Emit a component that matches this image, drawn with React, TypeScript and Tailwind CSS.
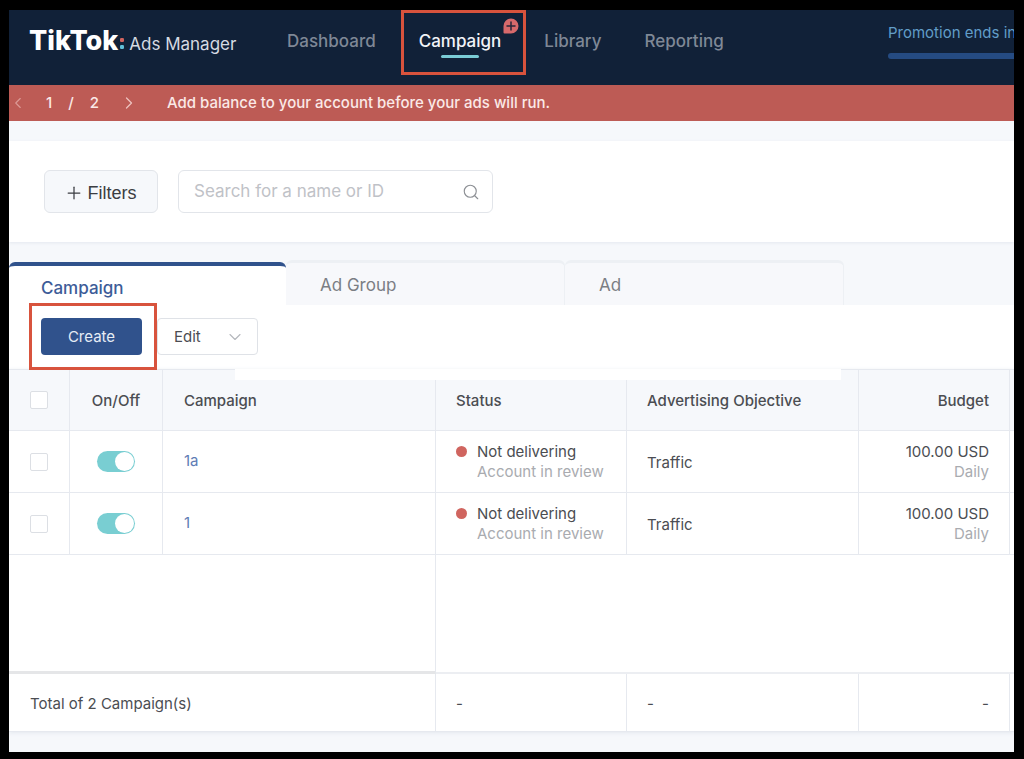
import { ChevronDown, ChevronLeft, ChevronRight, Plus, Search } from "lucide-react";

const rows = [
  { name: "1a", status: "Not delivering", note: "Account in review", objective: "Traffic", budget: "100.00 USD", period: "Daily" },
  { name: "1", status: "Not delivering", note: "Account in review", objective: "Traffic", budget: "100.00 USD", period: "Daily" },
];

const line = "border-[#e6e9ef]";

function Highlight({ className }: { className: string }) {
  return <span aria-hidden="true" className={`pointer-events-none absolute border-3 border-[#d8533d] ${className}`} />;
}

function Logo() {
  return (
    <a href="#home" className="flex items-baseline">
      <span className="text-[27px] leading-8 font-extrabold text-white">TikTok</span>
      <svg width="6" height="13" viewBox="0 0 6 13" className="ml-px" aria-hidden="true">
        <rect x="1" y="1" width="4" height="4" rx="1.2" fill="#d2645f" />
        <rect x="1" y="8" width="4" height="4" rx="1.2" fill="#62bfd8" />
      </svg>
      <span className="ml-1 text-[17px] leading-8 text-[#d5dae2]">Ads Manager</span>
    </a>
  );
}

function TopBar() {
  return (
    <header className="flex h-[75px] shrink-0 items-start bg-[#112138] pl-5">
      <div className="w-[258px] shrink-0 pt-[15px]">
        <Logo />
      </div>
      <nav className="flex shrink-0 gap-[43px] pt-[19px] text-[17px] leading-6 font-medium text-[#7f8896]">
        <a href="#dashboard">Dashboard</a>
        <a href="#campaign" className="relative flex flex-col items-center text-[#f1f4f8]">
          Campaign
          <span className="mt-[2px] h-[3px] w-[38px] rounded-full bg-[#7accd6]" />
          <svg width="16" height="16" viewBox="0 0 16 16" className="absolute -top-[11px] -right-[18px]" aria-hidden="true">
            <path d="M8 .5a7.5 7.5 0 1 1 0 15H1.5a1 1 0 0 1-1-1V8A7.5 7.5 0 0 1 8 .5Z" fill="#d7696b" />
            <path d="M8 4v8M4 8h8" stroke="#27263a" strokeWidth="1.5" strokeLinecap="round" />
          </svg>
          <Highlight className="-top-[19px] -right-[25px] -left-[18px] h-[65px]" />
        </a>
        <a href="#library">Library</a>
        <a href="#reporting">Reporting</a>
      </nav>
      <div className="ml-auto w-[126px] shrink-0 overflow-hidden pt-3">
        <p className="text-[15px] leading-[22px] whitespace-nowrap text-[#619dc8]">Promotion ends in</p>
        <div className="mt-[9px] h-[6px] rounded-l-full bg-[#254b82]" />
      </div>
    </header>
  );
}

function Notice() {
  return (
    <div className="flex h-9 shrink-0 items-center bg-[#bd5b55] text-[15px] font-medium text-[#fbe9e7]">
      <button type="button" aria-label="Previous notice" className="flex w-[37px] text-[#dc9a96]">
        <ChevronLeft size={18} strokeWidth={1.5} />
      </button>
      <span className="flex w-[73px] gap-4">
        <span>1</span>
        <span>/</span>
        <span>2</span>
      </span>
      <button type="button" aria-label="Next notice" className="flex w-12 text-[#eec2bf]">
        <ChevronRight size={20} strokeWidth={1.5} />
      </button>
      <p>Add balance to your account before your ads will run.</p>
    </div>
  );
}

function FilterBar() {
  return (
    <section className="mt-5 flex shrink-0 gap-5 bg-white px-[35px] py-[29px] shadow-[0_1px_3px_#e4e8ef]">
      <button type="button" className="flex h-[43px] w-[114px] items-center justify-center gap-1 rounded-md border border-[#e2e5ea] bg-[#f6f8fb] pt-[2px] pr-[2px] font-['Liberation_Sans',sans-serif] text-lg text-[#3b3d42]">
        <Plus size={20} strokeWidth={1.5} />
        Filters
      </button>
      <label className="flex h-[43px] w-[315px] items-center rounded-md border border-[#e2e5ea] bg-white pr-3 pl-[15px]">
        <input type="text" aria-label="Search campaigns" placeholder="Search for a name or ID" className="min-w-0 flex-1 text-[17px] text-[#4b4d52] outline-none placeholder:text-[#bfc2c7]" />
        <Search size={18} strokeWidth={1.5} className="text-[#8c8f94]" />
      </label>
    </section>
  );
}

function Tabs() {
  return (
    <div role="tablist" className="mt-[18px] flex h-[45px] shrink-0 items-end text-left text-[17px] leading-6">
      <button type="button" role="tab" aria-selected="true" className="h-[43px] w-[277px] rounded-t-md border-t-4 border-[#30528c] bg-white pt-1 pl-8 text-left font-medium text-[#3d5c98]">
        Campaign
      </button>
      <button type="button" role="tab" aria-selected="false" className="h-[45px] w-[279px] rounded-t-md border-t-3 border-r border-[#edf0f4] bg-[#f7f8fb] pt-[2px] pl-[34px] text-left text-[#7b7e84]">
        Ad Group
      </button>
      <button type="button" role="tab" aria-selected="false" className="h-[45px] w-[279px] rounded-t-md border-t-3 border-r border-[#edf0f4] bg-[#f7f8fb] pt-[2px] pl-[34px] text-left text-[#7b7e84]">
        Ad
      </button>
    </div>
  );
}

function Toolbar() {
  return (
    <div className="flex h-16 shrink-0 gap-[15px] bg-white pt-[13px] pl-8 text-[15px]">
      <div className="relative z-10 h-[37px]">
        <button type="button" className="h-[37px] w-[101px] rounded-[4px] bg-[#30528c] pt-px text-[#e6ecf5]">Create</button>
        <Highlight className="-top-[15px] -right-[15px] -bottom-[15px] -left-3" />
      </div>
      <button type="button" className="flex h-[37px] w-[101px] items-center justify-between rounded-[4px] border border-[#dfe2e7] pt-px pr-3 pl-4 text-[#4b4d52]">
        Edit
        <ChevronDown size={20} strokeWidth={1.3} className="text-[#b4b7bc]" />
      </button>
    </div>
  );
}

function Check({ label }: { label: string }) {
  return <input type="checkbox" aria-label={label} className="mx-auto block size-[18px] appearance-none rounded-[2px] border border-[#dcdfe4] bg-white checked:bg-[#30528c]" />;
}

function Toggle({ label }: { label: string }) {
  return (
    <input
      type="checkbox"
      role="switch"
      defaultChecked
      aria-label={label}
      className="mx-auto flex h-[21px] w-[38px] appearance-none items-center rounded-full bg-[#c9ccd1] px-px before:size-[19px] before:rounded-full before:bg-white before:content-[''] checked:justify-end checked:bg-[#79ced2]"
    />
  );
}

function CampaignTable() {
  const cell = `border-r border-b ${line}`;
  const head = `border-t pt-[2px] font-medium ${cell}`;
  return (
    <div className="relative shrink-0">
      <span aria-hidden="true" className="absolute top-0 right-[173px] left-[226px] h-[11px] bg-white" />
      <table className="w-full table-fixed border-separate border-spacing-0 bg-white text-[15px] leading-5 text-[#4b4d52] shadow-[0_1px_4px_#e4e8ef]">
        <colgroup>
          <col className="w-[61px]" />
          <col className="w-[93px]" />
          <col />
          <col className="w-[191px]" />
          <col className="w-[232px]" />
          <col className="w-[151px]" />
          <col className="w-1" />
        </colgroup>
        <thead>
          <tr className="h-[62px] bg-[#f6f8fb] text-left">
            <th className={`border-t ${cell}`}><Check label="Select all campaigns" /></th>
            <th className={`text-center ${head}`}>On/Off</th>
            <th className={`pl-[21px] ${head}`}>Campaign</th>
            <th className={`pl-5 ${head}`}>Status</th>
            <th className={`pl-5 ${head}`}>Advertising Objective</th>
            <th className={`pr-5 text-right ${head}`}>Budget</th>
            <th aria-hidden="true" className={`border-t border-b ${line}`} />
          </tr>
        </thead>
        <tbody>
          {rows.map((row) => (
            <tr key={row.name} className="h-[62px]">
              <td className={cell}><Check label={`Select campaign ${row.name}`} /></td>
              <td className={cell}><Toggle label={`Campaign ${row.name} on or off`} /></td>
              <td className={`pb-[2px] pl-[21px] ${cell}`}><a href={`#campaign-${row.name}`} className="text-[#5f7db5]">{row.name}</a></td>
              <td className={`pl-5 ${cell}`}>
                <div className="flex gap-[10px]">
                  <span className="mt-1 size-[11px] shrink-0 rounded-full bg-[#d0655f]" />
                  <div className="whitespace-nowrap">
                    {row.status}
                    <div className="text-[#a9abb0]">{row.note}</div>
                  </div>
                </div>
              </td>
              <td className={`pt-[2px] pl-5 ${cell}`}>{row.objective}</td>
              <td className={`pr-5 text-right ${cell}`}>
                {row.budget}
                <div className="text-[#a9abb0]">{row.period}</div>
              </td>
              <td className={`border-b ${line}`} />
            </tr>
          ))}
          <tr className="h-[119px]">
            <td colSpan={3} className="border-r border-b-3 border-r-[#e6e9ef] border-b-[#e5e6e8]" />
            <td colSpan={4} className="border-b-2 border-[#eceef2]" />
          </tr>
        </tbody>
        <tfoot>
          <tr className="h-[58px]">
            <td colSpan={3} className={`pt-[2px] pl-[21px] ${cell}`}>Total of 2 Campaign(s)</td>
            <td className={`pt-[2px] pl-5 ${cell}`}>-</td>
            <td className={`pt-[2px] pl-5 ${cell}`}>-</td>
            <td className={`pt-[2px] pr-5 text-right ${cell}`}>-</td>
            <td className={`border-b ${line}`} />
          </tr>
        </tfoot>
      </table>
    </div>
  );
}

export default function App() {
  return (
    <div className="flex min-h-screen bg-black pt-[10px] pr-[10px] pb-[7px] pl-[9px] font-['Inter',sans-serif]">
      <main className="flex min-w-0 flex-1 flex-col overflow-hidden bg-[#f6f8fb]">
        <TopBar />
        <Notice />
        <FilterBar />
        <Tabs />
        <Toolbar />
        <CampaignTable />
      </main>
    </div>
  );
}
